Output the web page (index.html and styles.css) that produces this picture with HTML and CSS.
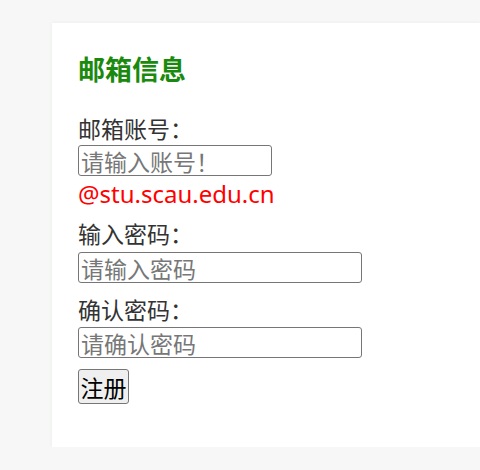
FILE: index.html
```html
<!DOCTYPE html>
<html lang="zh-CN">
<head>
<meta charset="utf-8">
<link rel="stylesheet" href="styles.css">
</head>
<body>
<div class="card">
  <h2 class="title">邮箱信息</h2>
  <form class="form">
    <label class="label l1">邮箱账号：</label>
    <input class="input input-short i1" type="text" placeholder="请输入账号！">
    <span class="suffix">@stu.scau.edu.cn</span>
    <label class="label l2">输入密码：</label>
    <input class="input i2" type="password" placeholder="请输入密码">
    <label class="label l3">确认密码：</label>
    <input class="input i3" type="password" placeholder="请确认密码">
    <button class="btn" type="button">注册</button>
  </form>
</div>
</body>
</html>
```
FILE: styles.css
```css
html, body {
  margin: 0;
  padding: 0;
  overflow: hidden;
  background: #f6f7f6;
}
body {
  padding-top: 23px;
  font-family: "Noto Sans", "Noto Sans CJK SC", sans-serif;
}
.card {
  margin-left: 52px;
  background: #fff;
  box-shadow: 0 0 4px rgba(40, 90, 40, 0.06);
  padding: 29px 0 43px 26px;
}
.title {
  margin: 0;
  font-size: 27px;
  line-height: 34px;
  font-weight: bold;
  color: #1a8a0e;
  font-family: "Noto Sans CJK SC", sans-serif;
}
.form {
  display: flex;
  flex-direction: column;
  align-items: flex-start;
}
.label {
  font-size: 23px;
  line-height: 30px;
  color: #333;
  font-family: "Noto Sans CJK SC", sans-serif;
}
.l1 { margin-top: 27px; }
.l2 { margin-top: 9px; }
.l3 { margin-top: 11px; }
.input {
  box-sizing: border-box;
  width: 284px;
  height: 31px;
  margin: 0;
  border: 1px solid #767676;
  border-radius: 3px;
  padding: 0 2px;
  font-size: 23px;
  line-height: 29px;
  font-family: "Noto Sans CJK SC", sans-serif;
  color: #000;
  background: #fff;
  outline: none;
}
.input::placeholder { color: #777; }
.input-short { width: 194px; }
.i1 { margin-top: 2px; }
.i2 { margin-top: 4px; }
.i3 { margin-top: 3px; }
.suffix {
  margin-top: 3px;
  font-size: 24px;
  line-height: 30px;
  color: #ff0000;
}
.btn {
  margin-top: 11px;
  box-sizing: border-box;
  width: 51px;
  height: 35px;
  padding: 0;
  border: 1px solid #767676;
  border-radius: 3px;
  background: #efefef;
  font-size: 23px;
  font-family: "Noto Sans CJK SC", sans-serif;
  color: #000;
}
```
